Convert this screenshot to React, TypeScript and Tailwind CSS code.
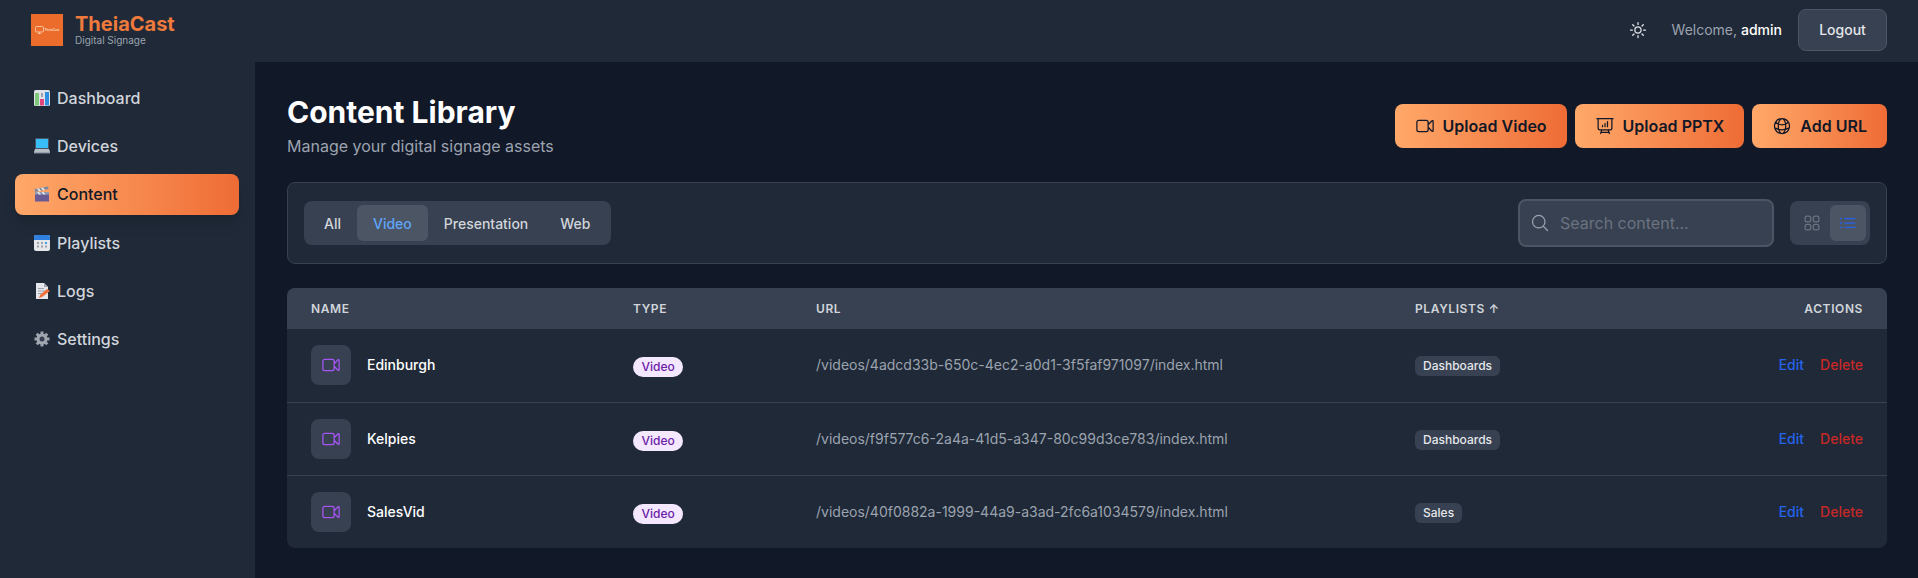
import React from "react";
import {
  HiOutlineVideoCamera,
  HiOutlinePresentationChartBar,
  HiOutlineGlobeAlt,
  HiOutlineSun,
  HiOutlineMagnifyingGlass,
  HiOutlineSquares2X2,
  HiOutlineListBullet,
} from "react-icons/hi2";

const ChartIcon = () => (
  <svg width="16" height="16" viewBox="0 0 16 16">
    <rect x="0" y="0" width="16" height="16" rx="1.500" fill="#dfe3e8" />
    <rect x="1" y="3" width="4" height="12.500" fill="#7fc77a" />
    <rect x="6" y="9" width="4" height="6.500" fill="#e0457b" />
    <rect x="11" y="2" width="4" height="13.500" fill="#2f8fe0" />
    <rect x="7" y="3" width="2" height="4" fill="#9ca3af" />
  </svg>
);
const LaptopIcon = () => (
  <svg width="16" height="16" viewBox="0 0 16 16">
    <rect x="1" y="0" width="14" height="11" rx="1" fill="#475569" />
    <rect x="2" y="1" width="12" height="9" fill="#38bdf8" />
    <path d="M1 11h14l1 3v1H0v-1z" fill="#b6bcc4" />
    <rect x="0" y="14.500" width="16" height="1" fill="#7b8794" />
  </svg>
);
const ClapperIcon = () => (
  <svg width="16" height="16" viewBox="0 0 16 16">
    <rect x="1" y="6" width="14" height="9.500" fill="#6b5b95" />
    <path d="M0.500 3.200 14 0.500l.6 2.600L1.200 5.900z" fill="#7c8aa0" />
    <path d="M3 2.700l2 2.600 2-.4-2-2.600zM7 1.900l2 2.600 2-.4-2-2.600z" fill="#e5e7eb" />
    <rect x="1" y="6" width="14" height="2.500" fill="#8f9bb0" />
    <path d="M3 6l2 2.500h2L5 6zM7.500 6l2 2.500h2L9.500 6z" fill="#e5e7eb" />
  </svg>
);
const CalendarIcon = () => (
  <svg width="16" height="16" viewBox="0 0 16 16">
    <rect x="0" y="0" width="16" height="16" rx="2" fill="#e5e7eb" />
    <path d="M0 5V2a2 2 0 0 1 2-2h12a2 2 0 0 1 2 2v3z" fill="#2f7fe0" />
    <g fill="#9ca3af">
      <rect x="3" y="7" width="2" height="2" />
      <rect x="7" y="7" width="2" height="2" />
      <rect x="11" y="7" width="2" height="2" fill="#38a0e8" />
      <rect x="3" y="10.500" width="2" height="2" />
      <rect x="7" y="10.500" width="2" height="2" />
      <rect x="11" y="10.500" width="2" height="2" />
    </g>
  </svg>
);
const MemoIcon = () => (
  <svg width="16" height="16" viewBox="0 0 16 16">
    <path d="M2 0h8l4 4v12H2z" fill="#e5e7eb" />
    <path d="M10 0l4 4h-4z" fill="#9ca3af" />
    <g fill="#9ca3af">
      <rect x="4" y="5" width="6" height="1" />
      <rect x="4" y="7.500" width="7" height="1" />
      <rect x="4" y="10" width="4" height="1" />
    </g>
    <path d="M5 15l1-3 7-6 3 2-8 6z" fill="#f0703a" />
  </svg>
);
const GearIcon = () => (
  <svg width="16" height="16" viewBox="0 0 16 16">
    <g stroke="#9ca3af" strokeWidth="3">
      <path d="M8 0.500v15M0.500 8h15M2.700 2.700l10.600 10.600M13.300 2.700 2.700 13.300" />
    </g>
    <circle cx="8" cy="8" r="5.500" fill="#a3a8b0" />
    <circle cx="8" cy="8" r="2.500" fill="#374151" />
  </svg>
);

const nav = [
  { label: "Dashboard", icon: <ChartIcon /> },
  { label: "Devices", icon: <LaptopIcon /> },
  { label: "Content", icon: <ClapperIcon />, active: true },
  { label: "Playlists", icon: <CalendarIcon /> },
  { label: "Logs", icon: <MemoIcon /> },
  { label: "Settings", icon: <GearIcon /> },
];

const rows = [
  { name: "Edinburgh", url: "/videos/4adcd33b-650c-4ec2-a0d1-3f5faf971097/index.html", playlist: "Dashboards" },
  { name: "Kelpies", url: "/videos/f9f577c6-2a4a-41d5-a347-80c99d3ce783/index.html", playlist: "Dashboards" },
  { name: "SalesVid", url: "/videos/40f0882a-1999-44a9-a3ad-2fc6a1034579/index.html", playlist: "Sales" },
];

function ActionButton({ icon, label }: { icon: React.ReactNode; label: string }) {
  return (
    <button className="flex h-[44px] items-center gap-2 rounded-lg bg-gradient-to-r from-[#ffa869] to-[#ee6c35] px-[20px] text-[16px] font-semibold text-[#111827]">
      {icon}
      {label}
    </button>
  );
}

export default function App() {
  return (
    <div className="flex h-screen flex-col overflow-hidden bg-[#111827] font-['Inter',sans-serif]">
      <header className="flex h-[62px] shrink-0 items-center justify-between bg-[#1f2937] pb-[2px] pl-[31px] pr-[31px]">
        <div className="flex items-center gap-3">
          <div className="flex h-[32px] w-[32px] items-center justify-center bg-[#eb6c2b]">
            <svg width="9" height="8" viewBox="0 0 9 8" fill="none" stroke="#fcd5b8" strokeWidth="0.8">
              <rect x="0.500" y="0.500" width="8" height="5.500" rx="1" />
              <path d="M3 7.500h3M4.500 6v1.500" />
            </svg>
            <span className="ml-[1px] text-[3px] font-bold leading-none text-[#fcd5b8]">TheiaCast</span>
          </div>
          <div>
            <div className="text-[20px] font-bold leading-[20px] text-[#f07a3c]">TheiaCast</div>
            <div className="text-[10px] leading-[12px] text-[#9ca3af]">Digital Signage</div>
          </div>
        </div>
        <div className="flex items-center">
          <HiOutlineSun className="mr-[24px] h-5 w-5 text-[#e5e7eb]" />
          <span className="mr-4 text-sm text-[#9ca3af]">
            Welcome, <span className="font-medium text-white">admin</span>
          </span>
          <button className="h-[42px] w-[89px] rounded-lg border border-[#4b5563] bg-[#374151] text-sm font-medium text-[#e5e7eb]">
            Logout
          </button>
        </div>
      </header>
      <div className="flex min-h-0 flex-1">
        <aside className="w-[255px] shrink-0 bg-[#1f2937] pl-[15px] pr-[16px] pt-[15.75px]">
          <nav className="flex flex-col gap-2">
            {nav.map((n) => (
              <div
                key={n.label}
                className={`flex h-[40.25px] items-center gap-[7px] rounded-lg pl-[19px] text-[16px] font-medium ${
                  n.active
                    ? "bg-gradient-to-r from-[#ffa869] to-[#ee6c35] text-[#111827] shadow-lg"
                    : "text-[#d1d5db]"
                }`}
              >
                {n.icon}
                {n.label}
              </div>
            ))}
          </nav>
        </aside>
        <main className="min-w-0 flex-1 pl-8 pr-[31px] pt-[32px]">
          <div className="flex items-start justify-between">
            <div>
              <h1 className="text-[30px] font-bold leading-9 text-white">Content Library</h1>
              <p className="mt-1 text-[16px] leading-6 text-[#9ca3af]">Manage your digital signage assets</p>
            </div>
            <div className="mt-[10px] flex gap-2">
              <ActionButton icon={<HiOutlineVideoCamera className="h-5 w-5" />} label="Upload Video" />
              <ActionButton icon={<HiOutlinePresentationChartBar className="h-5 w-5" />} label="Upload PPTX" />
              <ActionButton icon={<HiOutlineGlobeAlt className="h-5 w-5" />} label="Add URL" />
            </div>
          </div>
          <div className="mt-[24px] flex h-[82px] items-center justify-between rounded-lg border border-[#374151] bg-[#1f2937] px-4">
            <div className="flex rounded-lg bg-[#374151] p-1">
              {["All", "Video", "Presentation", "Web"].map((t) => (
                <div
                  key={t}
                  className={`rounded-md px-4 pb-[7px] pt-[9px] text-sm font-medium ${
                    t === "Video" ? "bg-[#4b5563] text-[#60a5fa]" : "text-[#d1d5db]"
                  }`}
                >
                  {t}
                </div>
              ))}
            </div>
            <div className="flex items-center gap-4">
              <div className="flex h-[48px] w-[256px] items-center gap-[10px] rounded-lg border-2 border-[#4b5563] bg-[#374151] pl-[10px]">
                <HiOutlineMagnifyingGlass className="h-5 w-5 text-[#9ca3af]" />
                <span className="text-[16px] text-[#6b7280]">Search content...</span>
              </div>
              <div className="flex rounded-lg bg-[#374151] p-1">
                <div className="flex h-9 w-9 items-center justify-center rounded-md">
                  <HiOutlineSquares2X2 className="h-5 w-5 text-[#6b7280]" />
                </div>
                <div className="flex h-9 w-9 items-center justify-center rounded-md bg-[#4b5563]">
                  <HiOutlineListBullet className="h-5 w-5 text-[#2563eb]" />
                </div>
              </div>
            </div>
          </div>
          <div className="mt-[24px] overflow-hidden rounded-lg bg-[#1f2937]">
            <table className="w-full table-fixed text-left">
              <thead className="bg-[#374151]">
                <tr className="h-[41px] text-xs font-semibold tracking-[0.6px] text-[#d1d5db]">
                  <th className="w-[322px] pl-6 font-semibold">NAME</th>
                  <th className="w-[183px] pl-6 font-semibold">TYPE</th>
                  <th className="w-[599px] pl-6 font-semibold">URL</th>
                  <th className="pl-6 font-semibold">PLAYLISTS ↑</th>
                  <th className="w-[200px] pr-6 text-right font-semibold">ACTIONS</th>
                </tr>
              </thead>
              <tbody>
                {rows.map((r, i) => (
                  <tr key={r.name} className={`h-[73px] ${i > 0 ? "border-t border-[#374151]" : ""}`}>
                    <td className="pl-6">
                      <div className="flex items-center gap-4">
                        <div className="flex h-10 w-10 items-center justify-center rounded-lg bg-[#374151]">
                          <HiOutlineVideoCamera className="h-5 w-5 text-[#a855f7]" />
                        </div>
                        <span className="text-sm font-medium text-white">{r.name}</span>
                      </div>
                    </td>
                    <td className="pl-6">
                      <span className="inline-block rounded-full bg-[#f3e8ff] px-[8.5px] py-[2px] text-xs font-medium leading-4 text-[#6b21a8]">
                        Video
                      </span>
                    </td>
                    <td className="truncate pl-6 text-sm text-[#9ca3af]">{r.url}</td>
                    <td className="pl-6">
                      <span className="relative -top-[1px] inline-block rounded-md bg-[#374151] px-2 py-[2px] text-xs font-medium leading-4 text-[#e5e7eb]">
                        {r.playlist}
                      </span>
                    </td>
                    <td className="pr-6 text-right text-sm font-medium">
                      <span className="text-[#2563eb]">Edit</span>
                      <span className="ml-4 text-[#c62828]">Delete</span>
                    </td>
                  </tr>
                ))}
              </tbody>
            </table>
          </div>
        </main>
      </div>
    </div>
  );
}
